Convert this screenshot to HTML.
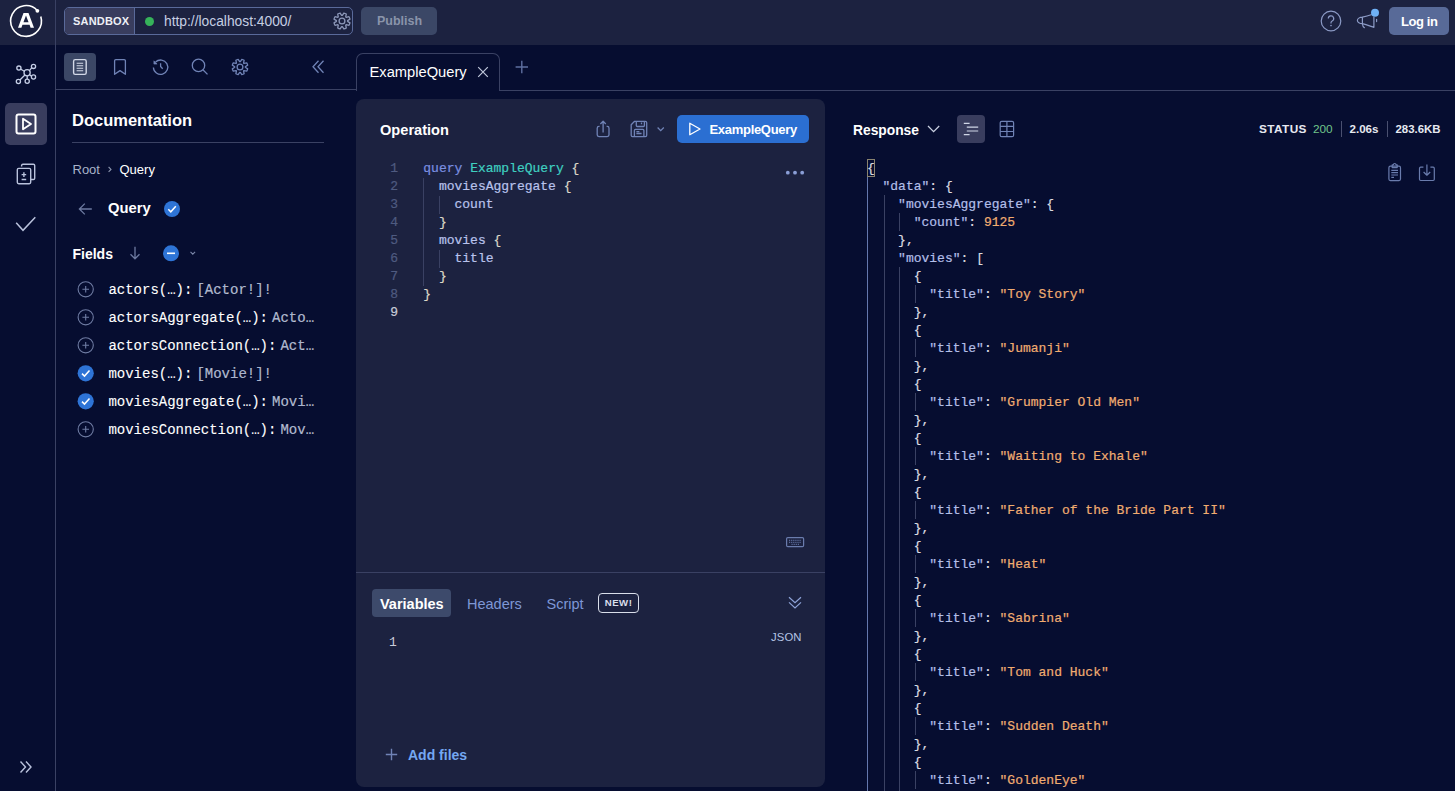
<!DOCTYPE html>
<html><head><meta charset="utf-8">
<style>
*{box-sizing:border-box;margin:0;padding:0}
html,body{width:1455px;height:791px;overflow:hidden;background:#060d30;font-family:"Liberation Sans",sans-serif;color:#fff}
.a{position:absolute}
.t{position:absolute;line-height:1;white-space:nowrap}
.b{font-weight:bold}
.m{font-family:"Liberation Mono",monospace;-webkit-text-stroke:0.2px currentColor}
svg{position:absolute;overflow:visible}
.ln{position:absolute;background:#3a4163}
</style></head><body>

<!-- top bar -->
<div class="a" style="left:0;top:0;width:1455px;height:45px;background:#1c2240"></div>
<div class="ln" style="left:55px;top:0;width:1px;height:791px"></div>

<!-- apollo logo -->
<svg style="left:0;top:0" width="56" height="45" viewBox="0 0 56 45">
  <path d="M40.78 16.45 A15.4 15.4 0 1 1 37.53 10.69" fill="none" stroke="#fff" stroke-width="1.6"/>
  <circle cx="37.4" cy="10.8" r="1.9" fill="#fff"/>
  <path d="M18 27.7 L23.5 13 H28.5 L34 27.7 H30.6 L29.56 24.8 H22.44 L21.4 27.7 Z M23.45 22.2 H28.55 L26 15.6 Z" fill="#fff"/>
</svg>
<!-- sandbox pill -->
<div class="a" style="left:64px;top:7px;width:289px;height:28px;border:1px solid #5a6a9a;border-radius:5px;background:#1c2240"></div>
<div class="a" style="left:65px;top:8px;width:70px;height:26px;background:#393d5e;border-radius:4px 0 0 4px;border-right:1px solid #5a6a9a"></div>
<div class="t b" style="left:73px;top:16px;font-size:11px;color:#eef0f6;letter-spacing:0.2px">SANDBOX</div>
<div class="a" style="left:145px;top:17px;width:9px;height:9px;border-radius:50%;background:#36b35a"></div>
<div class="t" style="left:164px;top:15px;font-size:13.8px;color:#c6cfe3">http://localhost:4000/</div>
<!-- url gear -->
<svg style="left:332px;top:11px" width="20" height="20" viewBox="332 11 20 20"><g fill="none" stroke="#8c97b8" stroke-width="1.3" stroke-linejoin="round"><circle cx="342" cy="21" r="2.9"/><path d="M342.34 15.41 L343.91 13.03 A8.2 8.2 0 0 1 346.28 14.01 L345.71 16.81 A5.6 5.6 0 0 1 346.19 17.29 L348.99 16.72 A8.2 8.2 0 0 1 349.97 19.09 L347.59 20.66 A5.6 5.6 0 0 1 347.59 21.34 L349.97 22.91 A8.2 8.2 0 0 1 348.99 25.28 L346.19 24.71 A5.6 5.6 0 0 1 345.71 25.19 L346.28 27.99 A8.2 8.2 0 0 1 343.91 28.97 L342.34 26.59 A5.6 5.6 0 0 1 341.66 26.59 L340.09 28.97 A8.2 8.2 0 0 1 337.72 27.99 L338.29 25.19 A5.6 5.6 0 0 1 337.81 24.71 L335.01 25.28 A8.2 8.2 0 0 1 334.03 22.91 L336.41 21.34 A5.6 5.6 0 0 1 336.41 20.66 L334.03 19.09 A8.2 8.2 0 0 1 335.01 16.72 L337.81 17.29 A5.6 5.6 0 0 1 338.29 16.81 L337.72 14.01 A8.2 8.2 0 0 1 340.09 13.03 L341.66 15.41 A5.6 5.6 0 0 1 342.34 15.41 Z"/></g></svg>

<!-- publish -->
<div class="a" style="left:361px;top:7px;width:76px;height:28px;background:#3b4766;border-radius:5px"></div>
<div class="t b" style="left:377px;top:15px;font-size:12.5px;color:#8a94aa">Publish</div>

<!-- help, megaphone, login -->
<svg style="left:1320px;top:10px" width="22" height="22" viewBox="0 0 22 22"><circle cx="11" cy="11" r="9.8" fill="none" stroke="#8c9bc6" stroke-width="1.2"/><path d="M8.3 8.6a2.7 2.7 0 1 1 3.9 2.4c-.8.4-1.2.9-1.2 1.7v.9" fill="none" stroke="#8c9bc6" stroke-width="1.2"/><circle cx="11" cy="15.6" r=".8" fill="#8c9bc6"/></svg>
<svg style="left:1350px;top:5px" width="35" height="30" viewBox="1350 5 35 30"><g fill="none" stroke="#8c9bc6" stroke-width="1.2" stroke-linejoin="round" stroke-linecap="round"><path d="M1362.4 17.2 C1365.5 16.6 1368.5 15.8 1371.2 14.8 M1362.4 17.2 A5 3.25 0 0 0 1362.4 23.7 C1366.3 24.6 1370.6 26.3 1373.9 27.4 V17.2 M1362.4 17.2 V24.2 C1362.6 25.8 1363.4 27 1364.4 27.7 M1376.6 19.3 V21.6"/></g><circle cx="1375" cy="12.8" r="4" fill="#6fb1f5"/></svg>
<div class="a" style="left:1389px;top:7px;width:60px;height:28px;background:#586a98;border-radius:5px"></div>
<div class="t b" style="left:1401px;top:14.5px;font-size:13px;color:#fff;letter-spacing:-0.4px">Log in</div>

<!-- left nav -->
<svg style="left:0;top:50px" width="55" height="50" viewBox="0 50 55 50">
 <g fill="none" stroke="#c5cee6" stroke-width="1.3">
  <circle cx="27.1" cy="72.7" r="3.1"/>
  <circle cx="18.9" cy="68.1" r="2.1"/><circle cx="33.5" cy="66.4" r="2.1"/><circle cx="33.5" cy="77" r="2.1"/><circle cx="27.2" cy="81.3" r="2.1"/><circle cx="18.4" cy="81.5" r="2.1"/>
  <path d="M20.8 69.2 L24.4 71.2 M31.7 67.9 L29.4 70.6 M31.5 76.2 L30 75 M27.2 75.8 V79.2 M19.9 80 L24.9 75"/>
 </g>
</svg>
<div class="a" style="left:5px;top:103px;width:42px;height:42px;background:#393d5e;border-radius:5px"></div>
<svg style="left:0;top:100px" width="55" height="50" viewBox="0 100 55 50">
 <rect x="16.5" y="114.5" width="19" height="19" rx="2" fill="none" stroke="#fff" stroke-width="2"/>
 <path d="M23 118.7 L31 124 L23 129.3 Z" fill="none" stroke="#fff" stroke-width="1.8" stroke-linejoin="round"/>
</svg>
<svg style="left:0;top:150px" width="55" height="100" viewBox="0 150 55 100">
 <g fill="none" stroke="#b9c2dc" stroke-width="1.4">
  <path d="M21.6 166.5 V165.5 A1.3 1.3 0 0 1 22.9 164.3 H33.4 A1.3 1.3 0 0 1 34.7 165.6 V178.2 A1.3 1.3 0 0 1 33.4 179.5 H30.9"/>
  <rect x="17.3" y="168.4" width="13.4" height="15.3" rx="1.4"/>
  <path d="M23.9 172.3 V177 M21.6 174.6 H26.2 M21.6 179.5 H26.2"/>
  <path d="M16.2 222.7 L23 230.3 L35.3 217.3" stroke-width="1.5"/>
 </g>
</svg>
<svg style="left:0;top:750px" width="55" height="30" viewBox="0 750 55 30">
 <path d="M20.5 761.5 L25.5 767 L20.5 772.5 M26 761.5 L31 767 L26 772.5" fill="none" stroke="#b9c2dc" stroke-width="1.4"/>
</svg>

<!-- sidebar toolbar -->
<div class="a" style="left:64px;top:53px;width:32px;height:28px;background:#3b4766;border-radius:4px"></div>
<svg style="left:56px;top:50px" width="300" height="35" viewBox="56 50 300 35">
 <rect x="73.6" y="59.6" width="12.6" height="14.8" rx="1.6" fill="none" stroke="#d3d9e8" stroke-width="1.4"/>
 <path d="M76.6 63.2 H83.2 M76.6 65.7 H83.2 M76.6 68.2 H83.2 M76.6 70.8 H83.2" stroke="#d3d9e8" stroke-width="1.1"/>
 <g fill="none" stroke="#7083b6" stroke-width="1.3" stroke-linejoin="round">
  <path d="M114.6 74.3 V60.8 A1.2 1.2 0 0 1 115.8 59.6 H124.2 A1.2 1.2 0 0 1 125.4 60.8 V74.3 L120 70.6 Z"/>
  <path d="M153.4 67.5 A7.2 7.2 0 1 0 155.6 62"/>
  <path d="M153.9 60.8 V64.1 H157.1 Z" fill="#7083b6" stroke-width="0.6"/>
  <path d="M160.6 63.2 V66.5 L162.7 68.7"/>
  <circle cx="198.5" cy="65.4" r="6.2"/>
  <path d="M202.9 69.8 L207.5 74.4"/>
 </g>
 <g fill="none" stroke="#7083b6" stroke-width="1.3" stroke-linejoin="round"><circle cx="240" cy="67" r="2.9"/><path d="M240.32 61.71 L241.84 59.32 A7.9 7.9 0 0 1 244.13 60.26 L243.51 63.03 A5.3 5.3 0 0 1 243.97 63.49 L246.74 62.87 A7.9 7.9 0 0 1 247.68 65.16 L245.29 66.68 A5.3 5.3 0 0 1 245.29 67.32 L247.68 68.84 A7.9 7.9 0 0 1 246.74 71.13 L243.97 70.51 A5.3 5.3 0 0 1 243.51 70.97 L244.13 73.74 A7.9 7.9 0 0 1 241.84 74.68 L240.32 72.29 A5.3 5.3 0 0 1 239.68 72.29 L238.16 74.68 A7.9 7.9 0 0 1 235.87 73.74 L236.49 70.97 A5.3 5.3 0 0 1 236.03 70.51 L233.26 71.13 A7.9 7.9 0 0 1 232.32 68.84 L234.71 67.32 A5.3 5.3 0 0 1 234.71 66.68 L232.32 65.16 A7.9 7.9 0 0 1 233.26 62.87 L236.03 63.49 A5.3 5.3 0 0 1 236.49 63.03 L235.87 60.26 A7.9 7.9 0 0 1 238.16 59.32 L239.68 61.71 A5.3 5.3 0 0 1 240.32 61.71 Z"/></g>
</svg>
<div class="ln" style="left:56px;top:89px;width:300px;height:1px"></div>
<div class="ln" style="left:56px;top:89px;width:300px;height:1px"></div>

<!-- documentation -->
<div class="t b" style="left:72px;top:111.5px;font-size:16.5px">Documentation</div>
<div class="ln" style="left:72px;top:142px;width:252px;height:1px"></div>

<!-- collapse -->
<svg style="left:306px;top:56px" width="24" height="22" viewBox="306 56 24 22">
 <path d="M318.5 60.8 L313 66.8 L318.5 72.8 M323.5 60.8 L318 66.8 L323.5 72.8" fill="none" stroke="#7083b6" stroke-width="1.3"/>
</svg>
<!-- breadcrumb -->
<div class="t" style="left:72.5px;top:162.5px;font-size:13px;color:#a7b2c9">Root</div>
<svg style="left:105px;top:163px" width="10" height="12" viewBox="105 163 10 12"><path d="M108.6 167 L111 169.4 L108.6 171.8" fill="none" stroke="#8a94ad" stroke-width="1.1"/></svg>
<div class="t" style="left:119.5px;top:162.5px;font-size:13px;color:#fff">Query</div>
<svg style="left:75px;top:199px" width="200" height="66" viewBox="75 199 200 66">
 <path d="M91.8 209 H79.6 M84.8 203.6 L79.4 209 L84.8 214.4" fill="none" stroke="#6d7aa0" stroke-width="1.3"/>
 <circle cx="172" cy="209" r="8" fill="#2e74d6"/>
 <path d="M168.3 209.3 L170.8 211.8 L175.8 206.2" fill="none" stroke="#fff" stroke-width="1.5"/>
 <path d="M135 246.8 V258.8 M130.5 254.3 L135 258.8 L139.5 254.3" fill="none" stroke="#6d7aa0" stroke-width="1.3"/>
 <circle cx="171" cy="253.3" r="8" fill="#2e74d6"/>
 <path d="M167 253.3 H175" stroke="#fff" stroke-width="1.6"/>
 <path d="M190.5 251.8 L192.8 254.1 L195.1 251.8" fill="none" stroke="#7a86a8" stroke-width="1.1"/>
</svg>
<div class="t b" style="left:108px;top:200.8px;font-size:14.8px;color:#fff">Query</div>
<div class="t b" style="left:72.5px;top:247.3px;font-size:14px;color:#fff">Fields</div>

<!-- fields list -->
<svg style="left:70px;top:275px" width="30" height="170" viewBox="70 275 30 170">
 <g fill="none" stroke="#6f7ca3" stroke-width="1.1">
  <circle cx="85.7" cy="289.3" r="7.6"/><path d="M85.7 286 V292.6 M82.4 289.3 H89"/>
  <circle cx="85.7" cy="317.3" r="7.6"/><path d="M85.7 314 V320.6 M82.4 317.3 H89"/>
  <circle cx="85.7" cy="345.3" r="7.6"/><path d="M85.7 342 V348.6 M82.4 345.3 H89"/>
  <circle cx="85.7" cy="429.3" r="7.6"/><path d="M85.7 426 V432.6 M82.4 429.3 H89"/>
 </g>
 <circle cx="85.7" cy="373.3" r="8.1" fill="#2e74d6"/>
 <path d="M82 373.6 L84.5 376.1 L89.5 370.5" fill="none" stroke="#fff" stroke-width="1.5"/>
 <circle cx="85.7" cy="401.3" r="8.1" fill="#2e74d6"/>
 <path d="M82 401.6 L84.5 404.1 L89.5 398.5" fill="none" stroke="#fff" stroke-width="1.5"/>
</svg>
<div class="m" style="position:absolute;left:108.4px;top:275.6px;font-size:14px;line-height:28px;white-space:pre;color:#fff;-webkit-text-stroke:0.1px #fff"><div>actors(…):<span style="color:#a9b3cc;margin-left:4px">[Actor!]!</span></div><div>actorsAggregate(…):<span style="color:#a9b3cc;margin-left:4px">Acto…</span></div><div>actorsConnection(…):<span style="color:#a9b3cc;margin-left:4px">Act…</span></div><div>movies(…):<span style="color:#a9b3cc;margin-left:4px">[Movie!]!</span></div><div>moviesAggregate(…):<span style="color:#a9b3cc;margin-left:4px">Movi…</span></div><div>moviesConnection(…):<span style="color:#a9b3cc;margin-left:4px">Mov…</span></div></div>
<!-- tabs -->
<div class="ln" style="left:356px;top:90px;width:1099px;height:1px"></div>
<div class="a" style="left:356px;top:53px;width:144px;height:38px;border:1px solid #3a4163;border-bottom:none;border-radius:7px 7px 0 0;background:#060d30"></div>

<div class="t" style="left:369.5px;top:65.3px;font-size:14.7px;color:#fff">ExampleQuery</div>
<svg style="left:470px;top:58px" width="60" height="30" viewBox="470 58 60 30">
 <path d="M478.2 67.2 L487.8 76.8 M487.8 67.2 L478.2 76.8" stroke="#c0c8dc" stroke-width="1.2"/>
 <path d="M521.8 60.8 V73.2 M515.6 67 H528" stroke="#5e6fa0" stroke-width="1.4"/>
</svg>

<!-- operation panel -->
<div class="a" style="left:356px;top:99px;width:469px;height:688px;background:#1c2240;border-radius:8px"></div>
<div class="ln" style="left:356px;top:572px;width:469px;height:1px"></div>
<div class="t b" style="left:380px;top:122.5px;font-size:14.6px;color:#fff">Operation</div>
<svg style="left:590px;top:110px" width="80" height="36" viewBox="590 110 80 36">
 <g fill="none" stroke="#7083b6" stroke-width="1.3" stroke-linejoin="round">
  <path d="M599.6 126.4 H599 A1.8 1.8 0 0 0 597.2 128.2 V134.8 A1.8 1.8 0 0 0 599 136.6 H607.2 A1.8 1.8 0 0 0 609 134.8 V128.2 A1.8 1.8 0 0 0 607.2 126.4 H606.6"/>
  <path d="M603.1 132.4 V121.4 M600.4 124 L603.1 121.3 L605.8 124"/>
  <path d="M634.6 121.3 H645.3 A1.4 1.4 0 0 1 646.7 122.7 V135.2 A1.4 1.4 0 0 1 645.3 136.6 H632.6 A1.4 1.4 0 0 1 631.2 135.2 V124.7 Z"/>
  <path d="M636.3 121.3 V125.5 A1 1 0 0 0 637.3 126.5 H643.4 A1 1 0 0 0 644.4 125.5 V121.3 M641.5 122.6 V124.2 M634.4 136.6 V130.4 A1 1 0 0 1 635.4 129.4 H642.9 A1 1 0 0 1 643.9 130.4 V136.6 M636.4 131.6 H639.4 M636.4 133.5 H641.6"/>
 </g>
 <path d="M657.6 127.5 L660.7 130.6 L663.8 127.5" fill="none" stroke="#7083b6" stroke-width="1.3"/>
</svg>
<div class="a" style="left:677px;top:115px;width:132px;height:28px;background:#2b6fd2;border-radius:5px"></div>
<svg style="left:685px;top:118px" width="20" height="22" viewBox="685 118 20 22">
 <path d="M689.8 123.2 L700 129 L689.8 134.8 Z" fill="none" stroke="#fff" stroke-width="1.3" stroke-linejoin="round"/>
</svg>
<div class="t b" style="left:709.5px;top:123px;font-size:13px;color:#fff;letter-spacing:-0.3px">ExampleQuery</div>
<!-- code -->
<div class="m" style="position:absolute;left:370px;top:159.6px;width:28px;font-size:13px;line-height:18px;text-align:right;color:#4f5b80;white-space:pre">1
2
3
4
5
6
7
8
<span style="color:#c8ccd8">9</span></div>
<div class="ln" style="left:423px;top:178px;width:1px;height:108px"></div>
<div class="ln" style="left:438.5px;top:196px;width:1px;height:18px"></div>
<div class="ln" style="left:438.5px;top:250px;width:1px;height:18px"></div>
<div class="m" style="position:absolute;left:423.3px;top:159.6px;font-size:13px;line-height:18px;color:#b9c3ec;white-space:pre"><span style="color:#7b8fe0">query</span> <span style="color:#3fd0c0">ExampleQuery</span> <span style="color:#dcd8c8">{</span>
  moviesAggregate <span style="color:#dcd8c8">{</span>
    count
  <span style="color:#dcd8c8">}</span>
  movies <span style="color:#dcd8c8">{</span>
    title
  <span style="color:#dcd8c8">}</span>
<span style="color:#dcd8c8">}</span>
</div>
<svg style="left:780px;top:160px" width="30" height="25" viewBox="780 160 30 25">
 <circle cx="787.8" cy="172.7" r="1.9" fill="#8a9ed6"/><circle cx="795" cy="172.7" r="1.9" fill="#8a9ed6"/><circle cx="802.2" cy="172.7" r="1.9" fill="#8a9ed6"/>
</svg>

<!-- keyboard -->
<svg style="left:784px;top:535px" width="22" height="14" viewBox="784 535 22 14">
 <rect x="786.6" y="537.6" width="17" height="9" rx="1.2" fill="none" stroke="#6a7cad" stroke-width="1.2"/>
 <path d="M789 540.3 H801.5 M789 542.3 H801.5 M791.5 544.3 H799" stroke="#6a7cad" stroke-width="1" stroke-dasharray="1.2 0.9"/>
</svg>
<!-- variables tabs -->
<div class="a" style="left:372px;top:589px;width:79px;height:28px;background:#3d4a6b;border-radius:4px"></div>
<div class="t b" style="left:380px;top:596.5px;font-size:14.5px;color:#fff">Variables</div>
<div class="t" style="left:467px;top:596.5px;font-size:14.5px;color:#7e97d6">Headers</div>
<div class="t" style="left:546.5px;top:596.5px;font-size:14.5px;color:#7e97d6">Script</div>
<div class="a" style="left:598px;top:593px;width:41px;height:20px;border:1.2px solid #d9deea;border-radius:4px"></div>
<div class="t b" style="left:604.8px;top:598.3px;font-size:9.6px;color:#d9deea;letter-spacing:0.5px">NEW!</div>
<svg style="left:785px;top:592px" width="20" height="22" viewBox="785 592 20 22">
 <path d="M789 597.2 L795 602.8 L801 597.2 M789 602.4 L795 608 L801 602.4" fill="none" stroke="#8ea3d8" stroke-width="1.2"/>
</svg>
<div class="t" style="left:771px;top:631.8px;font-size:11.3px;color:#b4c4e4;letter-spacing:0.1px">JSON</div>
<div class="m" style="position:absolute;left:389px;top:633.5px;font-size:13px;line-height:18px;color:#c8ccd8;-webkit-text-stroke:0">1</div>
<!-- add files -->
<svg style="left:382px;top:745px" width="20" height="20" viewBox="382 745 20 20">
 <path d="M391.5 748.8 V760.2 M385.8 754.5 H397.2" stroke="#7083b6" stroke-width="1.4"/>
</svg>
<div class="t b" style="left:408px;top:747.5px;font-size:14px;color:#74a8f2">Add files</div>

<!-- response -->
<div class="t b" style="left:853px;top:123.5px;font-size:13.8px;color:#fff">Response</div>
<svg style="left:925px;top:120px" width="100" height="25" viewBox="925 120 100 25">
 <path d="M928 126 L933.6 131.6 L939.2 126" fill="none" stroke="#c8cfe0" stroke-width="1.3"/>
</svg>
<div class="a" style="left:957px;top:115px;width:28px;height:28px;background:#393d5e;border-radius:4px"></div>
<svg style="left:957px;top:115px" width="70" height="28" viewBox="957 115 70 28">
 <path d="M963.8 123.4 H969.6 M966.8 127.2 H978.2 M966.8 131 H978.2 M963.8 134.6 H969.6" stroke="#d0d6e6" stroke-width="1.2"/>
 <rect x="1000.2" y="121.3" width="13.4" height="15.4" rx="1.5" fill="none" stroke="#7083b6" stroke-width="1.2"/>
 <path d="M1000.2 126.3 H1013.6 M1000.2 131.5 H1013.6 M1006.9 121.3 V136.7" stroke="#7083b6" stroke-width="1.2"/>
</svg>
<div class="t b" style="left:1259px;top:123.5px;font-size:11.8px;color:#e6e9f0;letter-spacing:0.4px">STATUS</div>
<div class="t" style="left:1313px;top:123.5px;font-size:11.8px;color:#6fc48a">200</div>
<div class="ln" style="left:1341px;top:121px;width:1px;height:16px;background:#4a5070"></div>
<div class="t b" style="left:1349.5px;top:123px;font-size:11.6px;color:#e6e9f0">2.06s</div>
<div class="ln" style="left:1387px;top:121px;width:1px;height:16px;background:#4a5070"></div>
<div class="t b" style="left:1395.5px;top:123.5px;font-size:11.4px;color:#e6e9f0">283.6KB</div>
<svg style="left:1380px;top:160px" width="60" height="25" viewBox="1380 160 60 25">
 <g fill="none" stroke="#6a7cad" stroke-width="1.2" stroke-linejoin="round">
  <rect x="1388.9" y="166.2" width="11.6" height="14.4" rx="1.5"/>
  <path d="M1392.2 166.2 V164.8 H1393.4 A1.3 1.3 0 0 1 1396 164.8 H1397.2 V167.6 H1392.2 Z"/>
  <path d="M1391.3 170.3 H1398 M1391.3 172.7 H1398 M1391.3 175 H1398 M1391.3 177.3 H1394"/>
  <path d="M1423.4 167.2 H1420.7 A1.2 1.2 0 0 0 1419.5 168.4 V179.3 A1.2 1.2 0 0 0 1420.7 180.5 H1433.1 A1.2 1.2 0 0 0 1434.3 179.3 V168.4 A1.2 1.2 0 0 0 1433.1 167.2 H1430.4"/>
  <path d="M1426.9 164.5 V175.2 M1423.6 172 L1426.9 175.2 L1430.2 172"/>
 </g>
</svg>

<!-- response code -->
<style>.k{color:#b3bfe8}.p{color:#dcdce0}.s{color:#f0ac70}</style>
<div class="a" style="left:867px;top:159px;width:8px;height:18px;border:1px solid #8a8470"></div>
<div class="a" style="left:867px;top:177px;width:1px;height:614px;background:#6477ad"></div>
<div class="ln" style="left:883.5px;top:195px;width:1px;height:596px"></div>
<div class="ln" style="left:898.8px;top:213px;width:1px;height:18px"></div>
<div class="ln" style="left:898.8px;top:267px;width:1px;height:524px"></div>
<div class="ln" style="left:914.5px;top:285px;width:1px;height:18px"></div>
<div class="ln" style="left:914.5px;top:339px;width:1px;height:18px"></div>
<div class="ln" style="left:914.5px;top:393px;width:1px;height:18px"></div>
<div class="ln" style="left:914.5px;top:447px;width:1px;height:18px"></div>
<div class="ln" style="left:914.5px;top:501px;width:1px;height:18px"></div>
<div class="ln" style="left:914.5px;top:555px;width:1px;height:18px"></div>
<div class="ln" style="left:914.5px;top:609px;width:1px;height:18px"></div>
<div class="ln" style="left:914.5px;top:663px;width:1px;height:18px"></div>
<div class="ln" style="left:914.5px;top:717px;width:1px;height:18px"></div>
<div class="ln" style="left:914.5px;top:771px;width:1px;height:18px"></div>
<div class="m" style="position:absolute;left:866.9px;top:160px;font-size:13px;line-height:18px;white-space:pre"><span class="p">{</span>
  <span class="k">"data"</span><span class="p">: {</span>
    <span class="k">"moviesAggregate"</span><span class="p">: {</span>
      <span class="k">"count"</span><span class="p">: </span><span class="s">9125</span>
    <span class="p">},</span>
    <span class="k">"movies"</span><span class="p">: [</span>
      <span class="p">{</span>
        <span class="k">"title"</span><span class="p">: </span><span class="s">"Toy Story"</span>
      <span class="p">},</span>
      <span class="p">{</span>
        <span class="k">"title"</span><span class="p">: </span><span class="s">"Jumanji"</span>
      <span class="p">},</span>
      <span class="p">{</span>
        <span class="k">"title"</span><span class="p">: </span><span class="s">"Grumpier Old Men"</span>
      <span class="p">},</span>
      <span class="p">{</span>
        <span class="k">"title"</span><span class="p">: </span><span class="s">"Waiting to Exhale"</span>
      <span class="p">},</span>
      <span class="p">{</span>
        <span class="k">"title"</span><span class="p">: </span><span class="s">"Father of the Bride Part II"</span>
      <span class="p">},</span>
      <span class="p">{</span>
        <span class="k">"title"</span><span class="p">: </span><span class="s">"Heat"</span>
      <span class="p">},</span>
      <span class="p">{</span>
        <span class="k">"title"</span><span class="p">: </span><span class="s">"Sabrina"</span>
      <span class="p">},</span>
      <span class="p">{</span>
        <span class="k">"title"</span><span class="p">: </span><span class="s">"Tom and Huck"</span>
      <span class="p">},</span>
      <span class="p">{</span>
        <span class="k">"title"</span><span class="p">: </span><span class="s">"Sudden Death"</span>
      <span class="p">},</span>
      <span class="p">{</span>
        <span class="k">"title"</span><span class="p">: </span><span class="s">"GoldenEye"</span>
      <span class="p">},</span></div>
</body></html>
